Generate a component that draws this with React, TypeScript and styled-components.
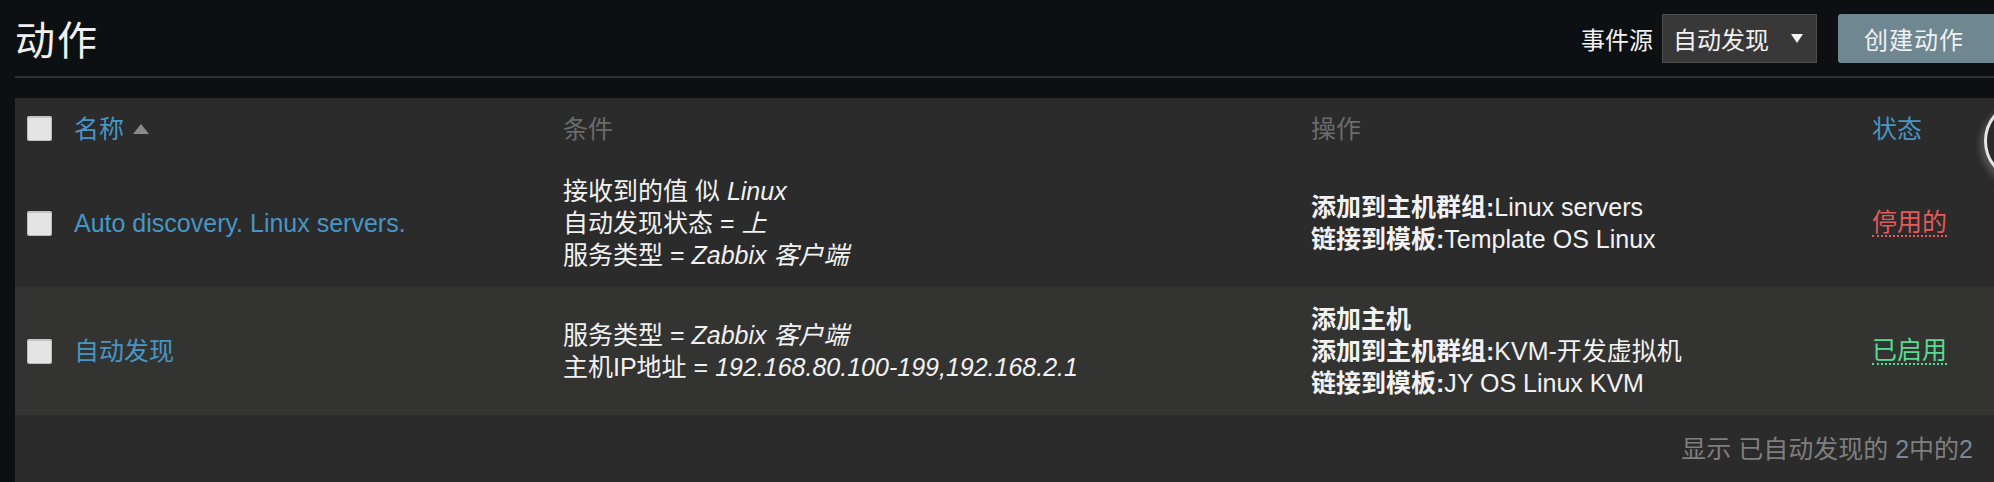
import React from "react";
import styled, { createGlobalStyle } from "styled-components";

const FONT = `"Liberation Sans", Arial, "Noto Sans CJK SC", sans-serif`;

const GlobalStyle = createGlobalStyle`
  html, body {
    margin: 0;
    padding: 0;
    background: #0c1012;
    overflow: hidden;
  }
  body {
    font-family: ${FONT};
    color: #f2f2f2;
  }
`;

const Page = styled.div`
  position: relative;
  padding-left: 15px;
  min-height: 482px;
`;

const Header = styled.header`
  height: 76px;
  border-bottom: 2px solid #303335;
  display: flex;
  align-items: center;
  justify-content: space-between;
`;

const Title = styled.h1`
  margin: 0;
  font-family: "Noto Sans CJK SC", sans-serif;
  font-weight: 400;
  font-size: 40px;
  line-height: 1;
  color: #f0f0f0;
  letter-spacing: 2px;
`;

const Controls = styled.div`
  display: flex;
  align-items: center;
  height: 49px;
`;

const Label = styled.span`
  font-size: 24px;
  color: #f2f2f2;
  margin-right: 9px;
`;

const Select = styled.div`
  box-sizing: border-box;
  width: 155px;
  height: 49px;
  background: #383838;
  border: 1px solid #4d4d4d;
  display: flex;
  align-items: center;
  padding-left: 10px;
  font-size: 24px;
  color: #f2f2f2;
  margin-right: 21px;
`;

const SelectArrow = styled.span`
  width: 0;
  height: 0;
  margin-left: 22px;
  border-left: 6px solid transparent;
  border-right: 6px solid transparent;
  border-top: 9px solid #f5f5f5;
`;

const Button = styled.button`
  box-sizing: border-box;
  width: 156px;
  height: 49px;
  border: none;
  border-radius: 3px 0 0 3px;
  background: #6f8791;
  color: #eef2f4;
  font-family: ${FONT};
  font-size: 24px;
  letter-spacing: 1px;
  text-align: left;
  padding: 0 0 0 26px;
`;

const Panel = styled.section`
  margin-top: 20px;
  background: #2b2b2b;
`;

const Row = styled.div<{ $h: number; $alt?: boolean }>`
  display: grid;
  grid-template-columns: 59px 489px 748px 561px 1fr;
  align-items: center;
  height: ${(p) => p.$h}px;
  background: ${(p) => (p.$alt ? "#333432" : "#2b2b2b")};
  font-size: 25px;
  line-height: 32px;
`;

const CheckCell = styled.div`
  padding-left: 12px;
  display: flex;
  align-items: center;
`;

const Checkbox = styled.span`
  display: block;
  width: 25px;
  height: 25px;
  border-radius: 3px;
  background: #e4e4e4;
  box-shadow: inset 0 2px 0 #c4c4c4, 0 0 0 1px #bcbcbc inset;
`;

const HeadLink = styled.span`
  color: #4796c4;
  display: inline-flex;
  align-items: center;
`;

const HeadText = styled.span`
  color: #6b6b6b;
`;

const SortUp = styled.span`
  width: 0;
  height: 0;
  margin-left: 9px;
  border-left: 8px solid transparent;
  border-right: 8px solid transparent;
  border-bottom: 10px solid #8a8a8a;
`;

const NameLink = styled.span`
  color: #4796c4;
`;

const Lines = styled.div`
  display: flex;
  flex-direction: column;
  color: #f2f2f2;
  white-space: nowrap;
`;

const Em = styled.i`
  font-style: italic;
`;

const Strong = styled.b`
  font-weight: 700;
`;

const Status = styled.span<{ $on?: boolean }>`
  justify-self: start;
  color: ${(p) => (p.$on ? "#59db8f" : "#e45959")};
  line-height: 26px;
  border-bottom: 2px dotted ${(p) => (p.$on ? "#59db8f" : "#e45959")};
`;

const Footer = styled.div`
  display: flex;
  justify-content: flex-end;
  padding: 17px 21px 30px 0;
  font-size: 25px;
  line-height: 32px;
  color: #7f7f7f;
  border-top: 1px solid #2e2e2e;
`;

const Num = styled.span`
  color: #7b8696;
`;

const Bubble = styled.div`
  position: absolute;
  left: 1984px;
  top: 100px;
  width: 76px;
  height: 76px;
  border-radius: 50%;
  border: 3px solid #e6e6e6;
  background: #2a2a2a;
  box-shadow: -4px 4px 6px rgba(120, 120, 120, 0.5);
`;

export default function App() {
  return (
    <>
      <GlobalStyle />
      <Page>
        <Header>
          <Title>动作</Title>
          <Controls>
            <Label>事件源</Label>
            <Select>
              自动发现
              <SelectArrow />
            </Select>
            <Button>创建动作</Button>
          </Controls>
        </Header>
        <Panel>
          <Row $h={61}>
            <CheckCell>
              <Checkbox />
            </CheckCell>
            <HeadLink>
              名称
              <SortUp />
            </HeadLink>
            <HeadText>条件</HeadText>
            <HeadText>操作</HeadText>
            <HeadLink>状态</HeadLink>
          </Row>
          <Row $h={128}>
            <CheckCell>
              <Checkbox />
            </CheckCell>
            <NameLink>Auto discovery. Linux servers.</NameLink>
            <Lines>
              <span>
                接收到的值 似 <Em>Linux</Em>
              </span>
              <span>
                自动发现状态 = <Em>上</Em>
              </span>
              <span>
                服务类型 = <Em>Zabbix 客户端</Em>
              </span>
            </Lines>
            <Lines>
              <span>
                <Strong>添加到主机群组:</Strong>Linux servers
              </span>
              <span>
                <Strong>链接到模板:</Strong>Template OS Linux
              </span>
            </Lines>
            <Status>停用的</Status>
          </Row>
          <Row $h={128} $alt>
            <CheckCell>
              <Checkbox />
            </CheckCell>
            <NameLink>自动发现</NameLink>
            <Lines>
              <span>
                服务类型 = <Em>Zabbix 客户端</Em>
              </span>
              <span>
                主机IP地址 = <Em>192.168.80.100-199,192.168.2.1</Em>
              </span>
            </Lines>
            <Lines>
              <span>
                <Strong>添加主机</Strong>
              </span>
              <span>
                <Strong>添加到主机群组:</Strong>KVM-开发虚拟机
              </span>
              <span>
                <Strong>链接到模板:</Strong>JY OS Linux KVM
              </span>
            </Lines>
            <Status $on>已启用</Status>
          </Row>
          <Footer>
            <span>
              显示 已自动发现的 <Num>2</Num>中的<Num>2</Num>
            </span>
          </Footer>
        </Panel>
        <Bubble />
      </Page>
    </>
  );
}
